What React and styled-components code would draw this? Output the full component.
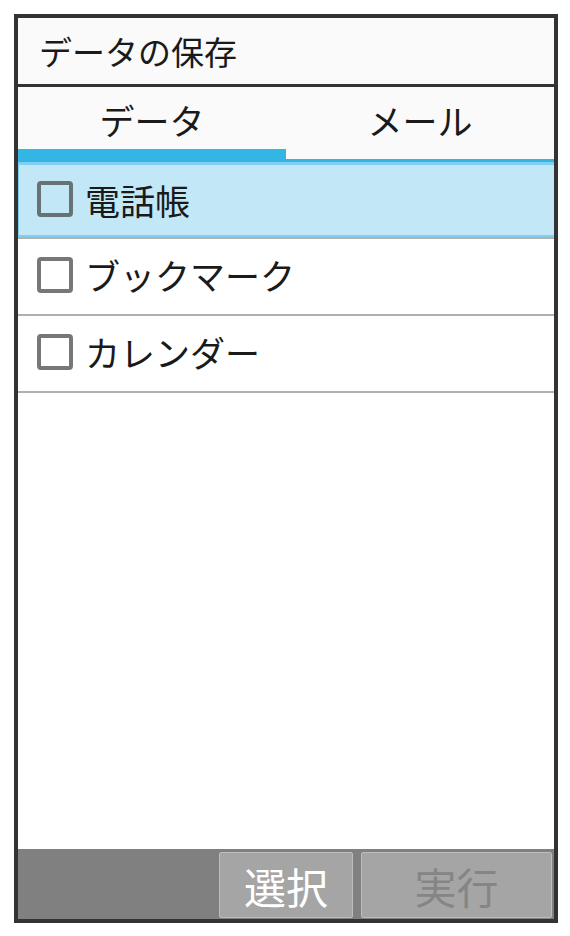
import React from 'react'
import styled, { createGlobalStyle } from 'styled-components'

const GlobalStyle = createGlobalStyle`
    html, body {
        margin: 0;
        padding: 0;
        background: #ffffff;
    }
    body {
        font-family: "Noto Sans CJK JP", "Noto Sans", sans-serif;
    }
`

const Frame = styled.div`
    box-sizing: border-box;
    margin: 14px;
    width: 544px;
    height: 909px;
    border: 4px solid #333333;
    display: flex;
    flex-direction: column;
    background: #ffffff;
`

const TitleBar = styled.div`
    height: 66px;
    background: #fafafa;
    border-bottom: 3px solid #333333;
    display: flex;
    align-items: center;
    padding-left: 21px;
    font-size: 33px;
    color: #1a1a1a;
    flex-shrink: 0;
`

const TabBar = styled.div`
    display: flex;
    background: #fafafa;
    flex-shrink: 0;
`

const Tab = styled.div`
    box-sizing: border-box;
    flex: 1;
    height: 75px;
    display: flex;
    justify-content: center;
    align-items: flex-start;
    padding-top: 11px;
    font-size: 35px;
    color: #1a1a1a;
    border-bottom: ${p => (p.active ? '13px' : '3px')} solid #33b5e5;
`

const TabLabel = styled.span`
    line-height: 44px;
`

const Row = styled.div`
    box-sizing: border-box;
    height: 77px;
    display: flex;
    align-items: center;
    padding: 0 0 4px 19px;
    font-size: 35px;
    color: #1a1a1a;
    background: ${p => (p.selected ? '#c2e8f7' : '#ffffff')};
    border-top: ${p => (p.selected ? '3px solid #80cff0' : 'none')};
    box-shadow: ${p => (p.selected ? 'inset 1px 0 0 #80cff0, inset 0 -2px 0 #80cff0' : 'none')};
    border-bottom: 2px solid #b0b0b0;
    flex-shrink: 0;
`

const Check = styled.span`
    box-sizing: border-box;
    width: 36px;
    height: 36px;
    border: 4px solid ${p => (p.selected ? '#687276' : '#777777')};
    border-radius: 4px;
    margin-right: 12px;
    flex-shrink: 0;
`

const Spacer = styled.div`
    flex: 1;
    background: #ffffff;
`

const BottomBar = styled.div`
    box-sizing: border-box;
    height: 70px;
    background: #808080;
    display: flex;
    justify-content: flex-end;
    align-items: stretch;
    gap: 8px;
    padding: 3px 2px 1px 0;
    flex-shrink: 0;
`

const SoftKey = styled.div`
    box-sizing: border-box;
    width: ${p => p.width}px;
    background: #a5a5a5;
    border: 1px solid #bdbdbd;
    border-radius: 2px;
    display: flex;
    justify-content: center;
    align-items: center;
    font-size: 42px;
    color: ${p => (p.disabled ? '#858585' : '#ffffff')};
`

const items = ['電話帳', 'ブックマーク', 'カレンダー']

export default function App() {
    return (
        <>
            <GlobalStyle />
            <Frame>
                <TitleBar>データの保存</TitleBar>
                <TabBar>
                    <Tab active><TabLabel>データ</TabLabel></Tab>
                    <Tab><TabLabel>メール</TabLabel></Tab>
                </TabBar>
                {items.map((label, i) => (
                    <Row key={label} selected={i === 0}>
                        <Check selected={i === 0} />
                        {label}
                    </Row>
                ))}
                <Spacer />
                <BottomBar>
                    <SoftKey width={134}>選択</SoftKey>
                    <SoftKey width={191} disabled>実行</SoftKey>
                </BottomBar>
            </Frame>
        </>
    )
}
